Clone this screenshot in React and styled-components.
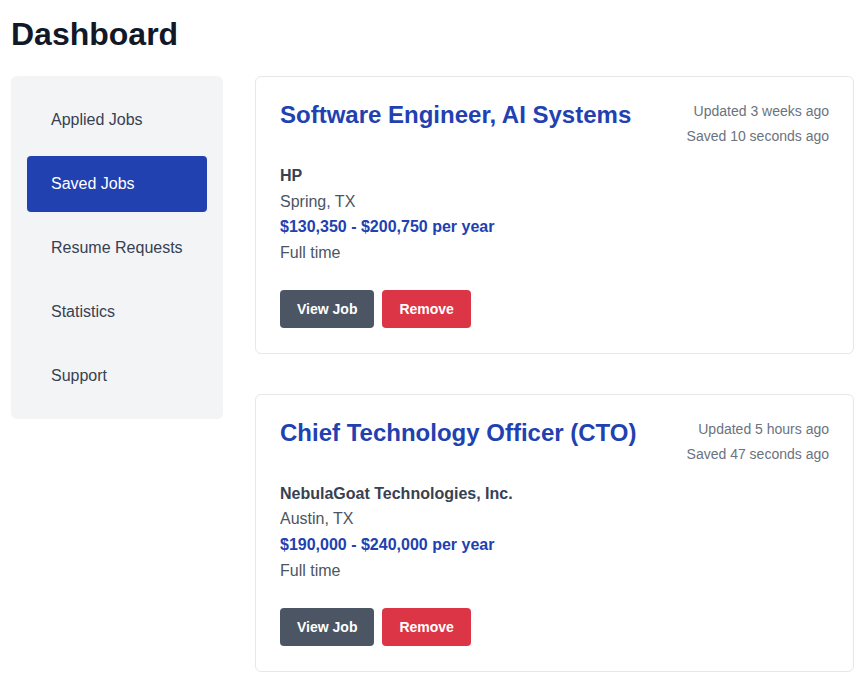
import React from "react";
import styled, { createGlobalStyle } from "styled-components";

const Global = createGlobalStyle`
  html, body { margin: 0; padding: 0; background: #ffffff; }
  body { font-family: "Liberation Sans", Arial, sans-serif; color: #374151; }
  * { box-sizing: border-box; }
`;

const Page = styled.div`
  padding: 16px 7px 16px 11px;
`;

const Title = styled.h1`
  margin: 0 0 23px;
  font-size: 32px;
  line-height: 37px;
  font-weight: 700;
  color: #111827;
`;

const Layout = styled.div`
  display: grid;
  grid-template-columns: 212px 1fr;
  gap: 32px;
  align-items: start;
`;

const Sidebar = styled.nav`
  background: #f3f4f6;
  border-radius: 6px;
  padding: 16px 16px 15px;
  display: flex;
  flex-direction: column;
  gap: 8px;
`;

const NavItem = styled.a`
  display: flex;
  align-items: center;
  height: 56px;
  padding: 0 24px;
  border-radius: 4px;
  font-size: 16px;
  text-decoration: none;
  cursor: pointer;
  color: ${(p) => (p.$active ? "#ffffff" : "#374151")};
  background: ${(p) => (p.$active ? "#2241b1" : "transparent")};
`;

const Main = styled.div`
  display: flex;
  flex-direction: column;
  gap: 40px;
`;

const Card = styled.article`
  border: 1px solid #e5e7eb;
  border-radius: 6px;
  padding: 24px 24px 25px;
  background: #ffffff;
`;

const CardHeader = styled.div`
  display: flex;
  justify-content: space-between;
  align-items: flex-start;
  gap: 16px;
  margin-bottom: 17px;
`;

const JobTitle = styled.h2`
  margin: 0;
  font-size: 24px;
  line-height: 28px;
  font-weight: 700;
  color: #2241b1;
`;

const Meta = styled.div`
  display: flex;
  flex-direction: column;
  align-items: flex-end;
  gap: 5px;
  font-size: 14px;
  line-height: 20px;
  color: #6b7280;
  white-space: nowrap;
`;

const Details = styled.div`
  display: flex;
  flex-direction: column;
  font-size: 16px;
  line-height: 25.6px;
`;

const Company = styled.div`
  font-weight: 700;
  color: #374151;
`;

const Line = styled.div`
  color: #4b5563;
`;

const Salary = styled.div`
  font-weight: 700;
  color: #2241b1;
`;

const Actions = styled.div`
  display: flex;
  gap: 8px;
  margin-top: 24.5px;
`;

const Button = styled.button`
  height: 38px;
  padding: 0 17px;
  border: none;
  border-radius: 4px;
  font-family: inherit;
  font-size: 14px;
  font-weight: 700;
  color: #ffffff;
  cursor: pointer;
  background: ${(p) => (p.$variant === "danger" ? "#dc3545" : "#4b5563")};
`;

const nav = ["Applied Jobs", "Saved Jobs", "Resume Requests", "Statistics", "Support"];

const jobs = [
  {
    title: "Software Engineer, AI Systems",
    updated: "Updated 3 weeks ago",
    saved: "Saved 10 seconds ago",
    company: "HP",
    location: "Spring, TX",
    salary: "$130,350 - $200,750 per year",
    type: "Full time",
  },
  {
    title: "Chief Technology Officer (CTO)",
    updated: "Updated 5 hours ago",
    saved: "Saved 47 seconds ago",
    company: "NebulaGoat Technologies, Inc.",
    location: "Austin, TX",
    salary: "$190,000 - $240,000 per year",
    type: "Full time",
  },
];

export default function App() {
  return (
    <>
      <Global />
      <Page>
        <Title>Dashboard</Title>
        <Layout>
          <Sidebar>
            {nav.map((n) => (
              <NavItem key={n} $active={n === "Saved Jobs"}>
                {n}
              </NavItem>
            ))}
          </Sidebar>
          <Main>
            {jobs.map((j) => (
              <Card key={j.title}>
                <CardHeader>
                  <JobTitle>{j.title}</JobTitle>
                  <Meta>
                    <span>{j.updated}</span>
                    <span>{j.saved}</span>
                  </Meta>
                </CardHeader>
                <Details>
                  <Company>{j.company}</Company>
                  <Line>{j.location}</Line>
                  <Salary>{j.salary}</Salary>
                  <Line>{j.type}</Line>
                </Details>
                <Actions>
                  <Button>View Job</Button>
                  <Button $variant="danger">Remove</Button>
                </Actions>
              </Card>
            ))}
          </Main>
        </Layout>
      </Page>
    </>
  );
}
